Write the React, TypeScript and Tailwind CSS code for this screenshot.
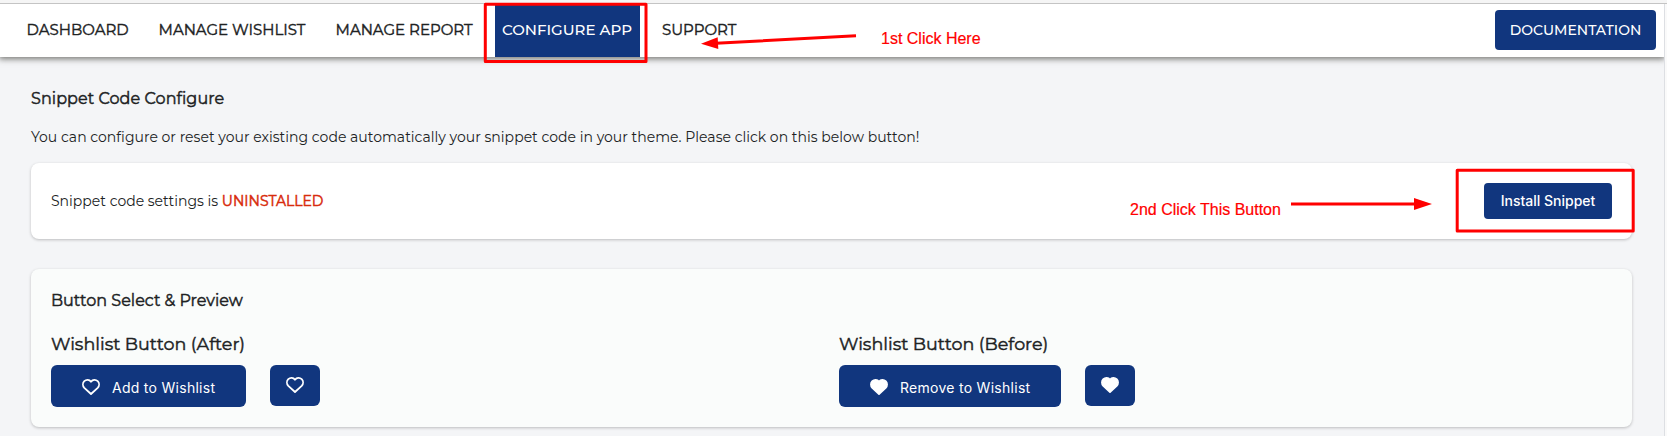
import React from "react";

function Heart({ filled }: { filled?: boolean }) {
  return (
    <svg viewBox="0 0 18 16" className="h-4 w-[18px] shrink-0" fill={filled ? "white" : "none"} stroke="white" strokeWidth="1.8" strokeLinejoin="round">
      <path d="M9 2.7C7.3.4 4.2.4 2.3 2.2.5 4 .5 6.9 2.3 8.8L9 15l6.7-6.2c1.8-1.9 1.8-4.8 0-6.6C13.8.4 10.7.4 9 2.7z" />
    </svg>
  );
}

type PreviewProps = {
  title: string;
  label: string;
  buttonClass: string;
  filled?: boolean;
};

function Preview({ title, label, buttonClass, filled }: PreviewProps) {
  return (
    <div>
      <h3 className="h-6 text-[17.5px] leading-6 [-webkit-text-stroke:0.45px_#202223]">{title}</h3>
      <div className="mt-[9px] flex items-start gap-6">
        <button className={"flex h-[42px] items-center rounded-md bg-[#11367e] pt-[2px] pl-[31px] text-white " + buttonClass}>
          <Heart filled={filled} />
          <span className="ml-3 font-['Inter',sans-serif] text-[14px] tracking-[0.28px] whitespace-nowrap">{label}</span>
        </button>
        <button className="flex h-[41px] w-[50px] items-center justify-center rounded-md bg-[#11367e] pb-[2px]">
          <Heart filled={filled} />
        </button>
      </div>
    </div>
  );
}

function Annotations() {
  return (
    <div className="pointer-events-none absolute inset-0 font-['Liberation_Sans',Arial,sans-serif] text-[16px] leading-5 text-[#ff0000]">
      <svg width="1667" height="436" viewBox="0 0 1667 436" className="absolute inset-0" fill="none" stroke="#ff0000" strokeWidth="3">
        <rect x="485.3" y="4.2" width="160.7" height="57.3" strokeLinejoin="round" />
        <rect x="1457.2" y="170.2" width="176" height="60.8" strokeLinejoin="round" />
        <path d="M856 35.8L716 43.2M1291 204H1416" />
        <path d="M701 43.8L717.7 37.2L718.3 49zM1432 204L1414 198V210z" fill="#ff0000" stroke="none" />
      </svg>
      <span className="absolute top-[29px] left-[881px] whitespace-nowrap [-webkit-text-stroke:0.2px_#ff0000]">1st Click Here</span>
      <span className="absolute top-[200px] left-[1130px] whitespace-nowrap [-webkit-text-stroke:0.2px_#ff0000]">2nd Click This Button</span>
    </div>
  );
}

export default function App() {
  return (
    <div className="relative h-[436px] w-[1667px] overflow-hidden bg-[#f4f5f7] font-['Montserrat','Inter',sans-serif] text-[#202223]">
      <div className="h-1 border-b border-[#c4c4c4] bg-[#f5f5f5]" />
      <div className="flex h-[432px]">
        <div className="w-[1665px] shrink-0 overflow-hidden border-r border-[#dddfe3]">
          <header className="flex h-[53px] bg-white pl-[26.6px] text-[15px] leading-[52px] whitespace-nowrap shadow-[0_1px_6px_1px_rgba(50,50,45,0.65)] [-webkit-text-stroke:0.4px_currentColor]">
            <div className="w-[132px]">DASHBOARD</div>
            <div className="w-[177px]">MANAGE WISHLIST</div>
            <div className="w-[159.4px]">MANAGE REPORT</div>
            <div className="w-[145px] bg-[#11367e] pl-[7px] font-medium text-white [-webkit-text-stroke:0]">CONFIGURE APP</div>
            <div className="w-[855px] pl-[22px]">SUPPORT</div>
            <button className="mt-[6px] h-10 w-[161px] rounded bg-[#11367e] text-[14px] leading-10 font-medium text-white [-webkit-text-stroke:0]">DOCUMENTATION</button>
          </header>
          <main className="pt-[30px] pl-[31px]">
            <h2 className="h-6 text-[16px] leading-6 tracking-[0.06px] [-webkit-text-stroke:0.45px_#202223]">Snippet Code Configure</h2>
            <p className="mt-[14px] h-6 text-[14px] leading-6 tracking-[0.016px]">You can configure or reset your existing code automatically your snippet code in your theme. Please click on this below button!</p>
            <section className="mt-[14px] flex h-[76px] w-[1601px] items-center justify-between rounded-lg bg-white px-5 shadow-[0_1px_3px_rgba(23,24,24,0.25)]">
              <p className="text-[14px]">
                Snippet code settings is <span className="text-[#d82c0d] [-webkit-text-stroke:0.5px_#d82c0d]">UNINSTALLED</span>
              </p>
              <button className="h-9 w-32 rounded bg-[#11367e] pb-px font-['Inter',sans-serif] text-[14px] font-medium text-white">Install Snippet</button>
            </section>
            <section className="mt-[30px] h-[158px] w-[1601px] rounded-lg bg-[#fafcfb] px-5 pt-5 shadow-[0_1px_3px_rgba(23,24,24,0.25)]">
              <h2 className="h-6 text-[16px] leading-6 [-webkit-text-stroke:0.45px_#202223]">Button Select &amp; Preview</h2>
              <div className="mt-[19px] grid grid-cols-[788px_1fr]">
                <Preview title="Wishlist Button (After)" label="Add to Wishlist" buttonClass="w-[195px]" />
                <Preview title="Wishlist Button (Before)" label="Remove to Wishlist" buttonClass="w-[222px]" filled />
              </div>
            </section>
          </main>
        </div>
        <div className="flex-1 bg-[#fafafa]" />
      </div>
      <Annotations />
    </div>
  );
}
